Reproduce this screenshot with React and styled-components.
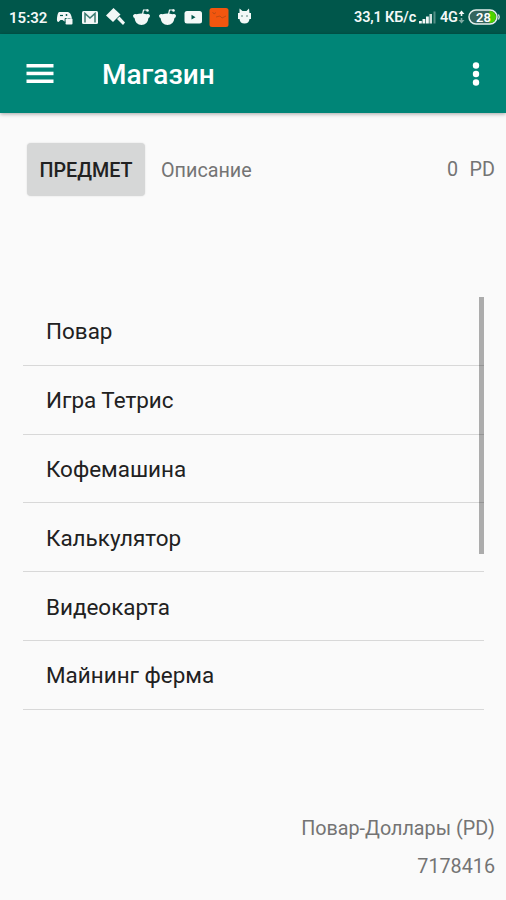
import React from 'react';
import styled, { createGlobalStyle } from 'styled-components';

const GlobalStyle = createGlobalStyle`
  * {
    box-sizing: border-box;
  }
  body {
    margin: 0;
    background: #fafafa;
    font-family: Roboto, 'Noto Sans', sans-serif;
  }
`;

const Screen = styled.div`
  width: 506px;
  height: 900px;
  display: flex;
  flex-direction: column;
  background: #fafafa;
  overflow: hidden;
`;

const StatusBar = styled.div`
  flex: none;
  height: 34px;
  display: flex;
  justify-content: space-between;
  align-items: center;
  padding: 0 5px 0 9px;
  background: #00574b;
  color: #f3f8f7;
`;

const StatusGroup = styled.div`
  display: flex;
  align-items: center;
  svg {
    display: block;
  }
`;

const StatusText = styled.span`
  width: ${({ $width }) => $width}px;
  padding-top: 1px;
  font-size: ${({ $size }) => $size || 15}px;
  line-height: 20px;
  font-weight: 600;
  letter-spacing: ${({ $spacing }) => $spacing || 0}px;
  white-space: nowrap;
`;

const AppBar = styled.header`
  flex: none;
  height: 79px;
  display: flex;
  align-items: center;
  padding: 0 26px;
  background: #008577;
  box-shadow: 0 1px 4px rgba(0, 0, 0, 0.35);
`;

const IconButton = styled.button`
  display: block;
  padding: 0;
  border: none;
  background: none;
  svg {
    display: block;
  }
`;

const Title = styled.h1`
  flex: 1;
  margin: 3px 0 0 48px;
  font-size: 28px;
  line-height: 34px;
  font-weight: 500;
  color: #ffffff;
`;

const ItemBar = styled.div`
  flex: none;
  height: 54px;
  margin: 29px 11px 0 27px;
  display: flex;
  align-items: center;
`;

const ItemButton = styled.button`
  width: 118px;
  height: 53px;
  padding: 2px 0 0;
  border: none;
  border-radius: 4px;
  background: #d6d7d7;
  box-shadow: 0 0 2px rgba(0, 0, 0, 0.12);
  font-family: inherit;
  font-size: 19.7px;
  font-weight: 500;
  color: #212121;
`;

const Label = styled.span`
  margin-top: 2px;
  font-size: 19.75px;
  line-height: 24px;
  word-spacing: ${({ $wordSpacing }) => $wordSpacing || 0}px;
  color: #747474;
  white-space: pre;
`;

const Description = styled(Label)`
  flex: 1;
  margin: 3px 0 0 16px;
`;

const ListArea = styled.div`
  position: relative;
  flex: none;
  width: 461px;
  margin: 101px 0 0 23px;
`;

const List = styled.ul`
  margin: 0;
  padding: 0;
  list-style: none;
`;

const ListItem = styled.li`
  height: 68.8px;
  display: flex;
  align-items: center;
  padding: 1px 23px 0;
  border-bottom: 1px solid #d8d8d8;
  font-size: 22.45px;
  color: #212121;
`;

const ScrollThumb = styled.div`
  position: absolute;
  top: 0;
  right: 0;
  width: 5px;
  height: 257px;
  background: rgba(0, 0, 0, 0.31);
`;

const Balance = styled.footer`
  margin-top: auto;
  padding: 0 11px 21px 0;
  display: flex;
  flex-direction: column;
  align-items: flex-end;
  gap: 12px;
`;

const items = [
  'Повар',
  'Игра Тетрис',
  'Кофемашина',
  'Калькулятор',
  'Видеокарта',
  'Майнинг ферма',
];

const NotificationIcons = () => (
  <svg width="204" height="24" viewBox="54 5 204 24" fill="#f3f8f7">
    {/* game chat */}
    <path d="M59 12h9q3 1 3.500 5v1h-6v3.500h-1l-2-1.500h-2l-2 2q-2 0-1.500-4 .5-5 2-6z" />
    <rect x="65.500" y="18.500" width="7" height="6" rx="1" />
    <path d="M67 19v-1.500a2 2 0 0 1 4 0V19" fill="none" stroke="#f3f8f7" />
    <path d="M60 15.500h3" stroke="#00574b" strokeWidth="1.200" />
    <circle cx="66.500" cy="15" r=".9" fill="#00574b" />
    <path d="M65 23v-4.500h1.500" fill="none" stroke="#00574b" strokeWidth=".8" />
    {/* mail */}
    <rect x="82" y="11" width="16" height="13" rx="1.500" />
    <path d="M85 22.500v-9l5 4.500 5-4.500v9" fill="none" stroke="#3c7c72" strokeWidth="1.500" />
    {/* cleaner brush */}
    <path d="M106 15.500 113.500 8l7 6.500-7.500 7.500z" />
    <path d="m117 19 2.500-2.500 5.500 6-2 2.500z" />
    {/* bowls */}
    {[141.5, 167.5].map((x) => (
      <g key={x} transform={`translate(${x} 17)`}>
        <path d="M-8.500-1.500q1.500-2 3.500-1.200 5-1.800 10 0 2.500-.8 3.500 1.200 0 2-1.500 2.500-1 7-7 7t-7-7q-1.500-.5-1.500-2.500z" />
        <path d="M1-2.500 2-7h4.500" fill="none" stroke="#f3f8f7" strokeWidth="1.200" />
        <circle cx="6" cy="-6.500" r="1.300" />
      </g>
    ))}
    {/* video */}
    <rect x="184.500" y="11" width="17.500" height="12.500" rx="2.500" />
    <path d="m191.500 14.800 4 2.400-4 2.400z" fill="#00574b" />
    {/* orange app */}
    <rect x="209.500" y="8" width="19" height="19" rx="2.500" fill="#f2560f" />
    <path d="m212.500 12 1.500 2 2-1.500M216 17l4-1 2 2 4-2" fill="none" stroke="#a84814" opacity=".7" />
    {/* robot cat */}
    <path d="m239.500 8.500 3 2.500h4l2.500-2.500.5 4.500h1.500v6h-1.500q-.5 4.500-5 4.500t-5-4.500H238v-6h1.500z" />
    <path d="M241 16h2m3 0h2" stroke="#57857e" />
  </svg>
);

const SignalIcon = () => (
  <svg width="22" height="16" viewBox="0 0 22 16" fill="#f3f8f7">
    <rect x="1" y="12" width="2.800" height="2.500" />
    <rect x="4.500" y="10" width="2.800" height="4.500" />
    <rect x="8" y="7.500" width="2.800" height="7" />
    <rect x="11.500" y="5" width="2.500" height="9.500" opacity=".85" />
    <rect x="15.500" y="2.500" width="2" height="12" opacity=".35" />
  </svg>
);

const DataArrows = () => (
  <svg width="10" height="14" viewBox="0 0 10 14">
    <path d="M.5 4 3.500 0.500 6.500 4H4.300v2H2.700V4z" fill="#f3f8f7" />
    <path d="M.5 10 3.500 13.500 6.500 10H4.300V8H2.700v2z" fill="#7fa9a2" />
  </svg>
);

const Battery = () => (
  <svg width="33" height="16" viewBox="0 0 33 16">
    <defs>
      <clipPath id="charge">
        <rect x="2" y="2" width="26" height="12" rx="6" />
      </clipPath>
    </defs>
    <rect x="1" y="1" width="28" height="14" rx="7" fill="#34645d" stroke="#e5efed" strokeWidth="1.500" />
    <rect x="21.500" y="2" width="9" height="12" fill="#4dd300" clipPath="url(#charge)" />
    <path d="M30.500 5.500q1.500 2.500 0 5" fill="none" stroke="#e5efed" strokeWidth="1.300" />
    <text x="15.500" y="12.700" textAnchor="middle" fontSize="13" fontWeight="600" fill="#fff">
      28
    </text>
  </svg>
);

const MenuIcon = () => (
  <svg width="28" height="20" viewBox="0 0 28 20" fill="#fff">
    <rect x=".5" y="0" width="27" height="3.500" />
    <rect x=".5" y="7.700" width="27" height="3.500" />
    <rect x=".5" y="15.500" width="27" height="3.500" />
  </svg>
);

const MoreIcon = () => (
  <svg width="8" height="24" viewBox="0 0 8 24" fill="#fff">
    <circle cx="4" cy="3.500" r="3.200" />
    <circle cx="4" cy="12" r="3.200" />
    <circle cx="4" cy="20.500" r="3.200" />
  </svg>
);

const App = () => (
  <Screen>
    <GlobalStyle />
    <StatusBar>
      <StatusGroup>
        <StatusText $width={45}>15:32</StatusText>
        <NotificationIcons />
      </StatusGroup>
      <StatusGroup>
        <StatusText $width={64} $size={14.5} $spacing={-0.15}>33,1 КБ/с</StatusText>
        <SignalIcon />
        <StatusText $width={18} $size={14.5} $spacing={-0.3}>4G</StatusText>
        <DataArrows />
        <Battery />
      </StatusGroup>
    </StatusBar>
    <AppBar>
      <IconButton type="button" aria-label="Меню">
        <MenuIcon />
      </IconButton>
      <Title>Магазин</Title>
      <IconButton type="button" aria-label="Ещё">
        <MoreIcon />
      </IconButton>
    </AppBar>
    <ItemBar>
      <ItemButton type="button">ПРЕДМЕТ</ItemButton>
      <Description>Описание</Description>
      <Label $wordSpacing={0.8}>0  PD</Label>
    </ItemBar>
    <ListArea>
      <List>
        {items.map((item) => (
          <ListItem key={item}>{item}</ListItem>
        ))}
      </List>
      <ScrollThumb />
    </ListArea>
    <Balance>
      <Label>Повар-Доллары (PD)</Label>
      <Label>7178416</Label>
    </Balance>
  </Screen>
);

export default App;
